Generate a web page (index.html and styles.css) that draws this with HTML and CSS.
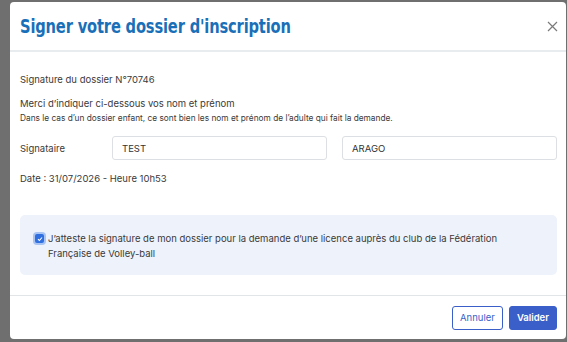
FILE: index.html
```html
<!DOCTYPE html>
<html lang="fr">
<head>
  <meta charset="UTF-8" />
  <title>Signer votre dossier d'inscription</title>
  <link rel="stylesheet" href="styles.css">
</head>
<body>
  <div class="modal">
    <div class="modal-header">
      <h2>Signer votre dossier d'inscription</h2>
      <button class="close" aria-label="Fermer">
        <svg width="11" height="11" viewBox="0 0 11 11"><path d="M1 1L10 10M10 1L1 10" stroke="#7a7a7a" stroke-width="1.2" fill="none"/></svg>
      </button>
    </div>

    <div class="modal-body">
      <p class="ref">Signature du dossier N°70746</p>
      <p class="intro">Merci d’indiquer ci-dessous vos nom et prénom</p>
      <p class="hint">Dans le cas d’un dossier enfant, ce sont bien les nom et prénom de l’adulte qui fait la demande.</p>

      <div class="signer">
        <label>Signataire</label>
        <input type="text" value="TEST" />
        <input type="text" value="ARAGO" />
      </div>
      <p class="date">Date : 31/07/2026 - Heure 10h53</p>

      <div class="attest">
        <span class="check">
          <svg width="6" height="6" viewBox="0 0 6 6"><path d="M1 3.2L2.4 4.5L5 1.5" stroke="#fff" stroke-width="1.1" fill="none"/></svg>
        </span>
        <p>J’atteste la signature de mon dossier pour la demande d’une licence auprès du club de la Fédération Française de Volley-ball</p>
      </div>
    </div>

    <div class="modal-footer">
      <button class="btn btn-outline">Annuler</button>
      <button class="btn btn-primary">Valider</button>
    </div>
  </div>
</body>
</html>
```

FILE: styles.css
```css
body {
  margin: 0;
  background: #6f6f6f;
  font-family: Inter, 'Noto Sans', sans-serif;
  color: #3a3a3a;
  padding: 2px 1px 3px 10px;
  height: 342px;
  box-sizing: border-box;
}
.modal {
  background: #fff;
  border-radius: 4px;
  height: 100%;
  display: flex;
  flex-direction: column;
}
.modal-header {
  display: flex;
  align-items: center;
  justify-content: space-between;
  height: 48px;
  padding: 0 8px 0 10px;
  border-bottom: 2px solid #e8ecef;
}
.modal-header h2 {
  margin: 0;
  font-family: 'DejaVu Sans Condensed', sans-serif;
  font-weight: bold;
  font-size: 20px;
  color: #1a70b8;
  letter-spacing: -0.2px;
  transform: scaleX(0.815);
  transform-origin: left center;
  white-space: nowrap;
}
.close {
  background: none;
  border: none;
  padding: 0;
  display: flex;
}
.modal-body {
  flex: 1;
  padding: 22px 9px 0 10px;
}
.modal-body p {
  margin: 0;
}
.ref {
  font-size: 9.5px;
  margin-bottom: 13px !important;
}
.intro {
  font-size: 9.5px;
}
.hint {
  font-size: 8.3px;
  margin-top: 4px !important;
}
.signer {
  display: flex;
  align-items: center;
  gap: 15px;
  margin-top: 13px;
}
.signer label {
  font-size: 9.5px;
  width: 77px;
}
.signer input {
  flex: 1;
  height: 24px;
  box-sizing: border-box;
  border: 1px solid #dcdfe3;
  border-radius: 3px;
  padding: 0 9px;
  font-family: inherit;
  font-size: 9.5px;
  color: #333;
}
.date {
  font-size: 9.5px;
  margin-top: 13px !important;
}
.attest {
  margin-top: 31px;
  background: #eef3fb;
  border-radius: 5px;
  height: 60px;
  box-sizing: border-box;
  display: flex;
  align-items: flex-start;
  gap: 4px;
  padding: 16px 20px 0 15px;
}
.attest p {
  font-size: 9.5px;
  line-height: 15px;
}
.check {
  flex: none;
  width: 9px;
  height: 9px;
  margin-top: 3px;
  background: #2f6fe0;
  border-radius: 2px;
  box-shadow: 0 0 0 2px #a9c4f3;
  display: flex;
  align-items: center;
  justify-content: center;
}
.modal-footer {
  border-top: 1px solid #e2e5e8;
  height: 43px;
  display: flex;
  align-items: center;
  justify-content: flex-end;
  gap: 6px;
  padding: 0 9px;
}
.btn {
  height: 24px;
  border-radius: 3px;
  font-family: inherit;
  font-size: 9.5px;
  padding: 0 7px;
  box-sizing: border-box;
}
.btn-outline {
  background: #fff;
  border: 1px solid #3a5fc8;
  color: #3a5fc8;
}
.btn-primary {
  background: #3a5fc8;
  border: 1px solid #3a5fc8;
  color: #fff;
  font-weight: 600;
}
```
